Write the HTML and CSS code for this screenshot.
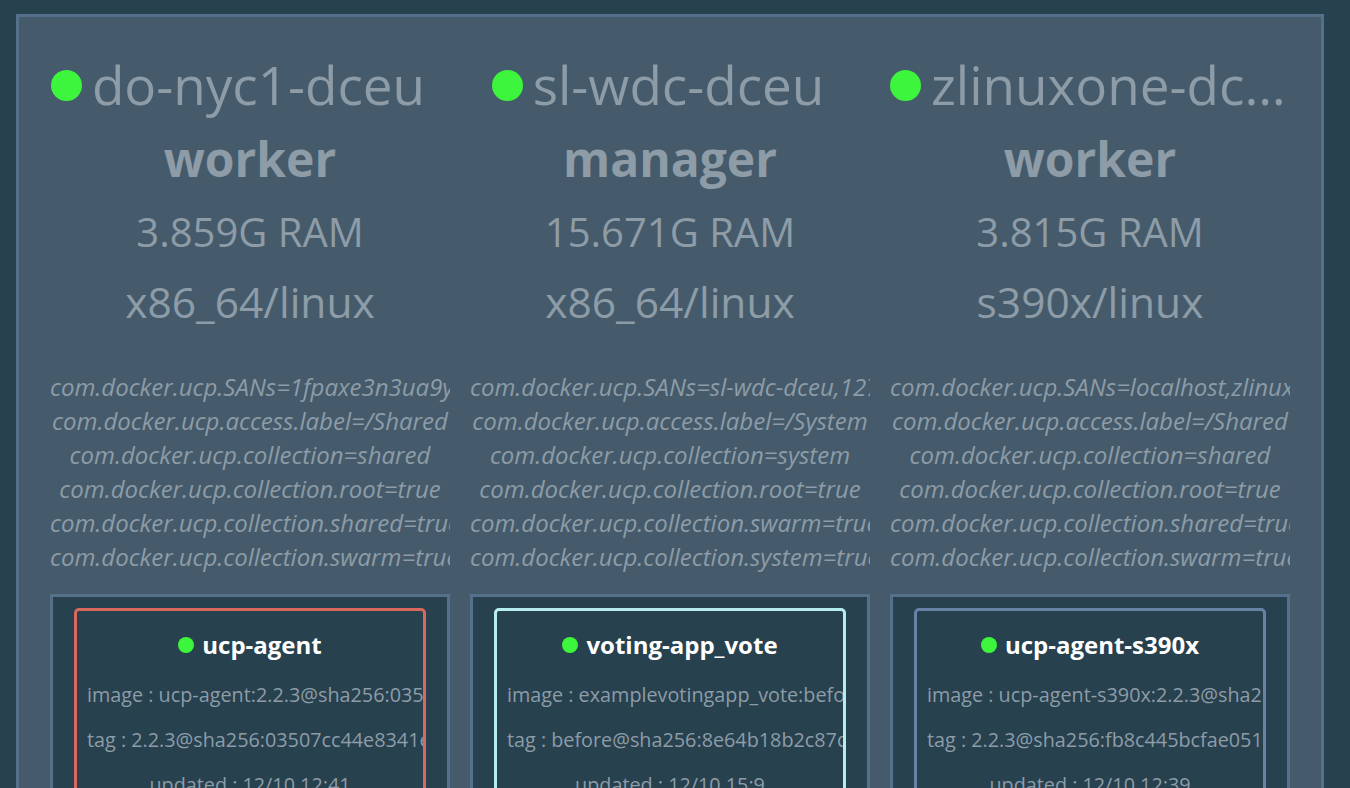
FILE: index.html
```html
<!DOCTYPE html>
<html lang="en">

<head>
    <meta charset="UTF-8">
    <meta name="viewport" content="width=device-width, initial-scale=1.0">
    <title>Swarm Visualizer</title>
    <link rel="stylesheet" href="styles.css">
</head>

<body>
    <div class="cluster">
        <div class="node">
            <div class="node-name"><span class="dot"></span><span class="name-text">do-nyc1-dceu</span></div>
            <div class="node-role">worker</div>
            <div class="node-info">3.859G RAM</div>
            <div class="node-info arch">x86_64/linux</div>
            <div class="labels">
                <div>com.docker.ucp.SANs=1fpaxe3n3ua9y4lhd8t1cv0ds,do-nyc1-dceu,127.0.0.1</div>
                <div>com.docker.ucp.access.label=/Shared</div>
                <div>com.docker.ucp.collection=shared</div>
                <div>com.docker.ucp.collection.root=true</div>
                <div>com.docker.ucp.collection.shared=true</div>
                <div>com.docker.ucp.collection.swarm=true</div>
            </div>
            <div class="tasks">
                <div class="task task-red">
                    <div class="task-name"><span class="dot small"></span>ucp-agent</div>
                    <div class="task-line">image : ucp-agent:2.2.3@sha256:03507cc44e8341e4a7b5b9ecc4c4ec6fa3f2c4a3d2</div>
                    <div class="task-line">tag : 2.2.3@sha256:03507cc44e8341e4a7b5b9ecc4c4ec6fa3f2c4a3d2</div>
                    <div class="task-line">updated : 12/10 12:41</div>
                </div>
            </div>
        </div>

        <div class="node">
            <div class="node-name"><span class="dot"></span><span class="name-text">sl-wdc-dceu</span></div>
            <div class="node-role">manager</div>
            <div class="node-info">15.671G RAM</div>
            <div class="node-info arch">x86_64/linux</div>
            <div class="labels">
                <div>com.docker.ucp.SANs=sl-wdc-dceu,127.0.0.1,169.45.100.12</div>
                <div>com.docker.ucp.access.label=/System</div>
                <div>com.docker.ucp.collection=system</div>
                <div>com.docker.ucp.collection.root=true</div>
                <div>com.docker.ucp.collection.swarm=true</div>
                <div>com.docker.ucp.collection.system=true</div>
            </div>
            <div class="tasks">
                <div class="task task-cyan">
                    <div class="task-name"><span class="dot small"></span>voting-app_vote</div>
                    <div class="task-line">image : examplevotingapp_vote:before@sha256:8e64b18b2c87de902a2b72321c89b4af4e2b942d</div>
                    <div class="task-line">tag : before@sha256:8e64b18b2c87de902a2b72321c89b4af4e2b942d</div>
                    <div class="task-line">updated : 12/10 15:9</div>
                </div>
            </div>
        </div>

        <div class="node">
            <div class="node-name"><span class="dot"></span><span class="name-text">zlinuxone-dceu</span></div>
            <div class="node-role">worker</div>
            <div class="node-info">3.815G RAM</div>
            <div class="node-info arch">s390x/linux</div>
            <div class="labels">
                <div>com.docker.ucp.SANs=localhost,zlinuxone-dceu,127.0.0.1</div>
                <div>com.docker.ucp.access.label=/Shared</div>
                <div>com.docker.ucp.collection=shared</div>
                <div>com.docker.ucp.collection.root=true</div>
                <div>com.docker.ucp.collection.shared=true</div>
                <div>com.docker.ucp.collection.swarm=true</div>
            </div>
            <div class="tasks">
                <div class="task task-slate">
                    <div class="task-name"><span class="dot small"></span>ucp-agent-s390x</div>
                    <div class="task-line">image : ucp-agent-s390x:2.2.3@sha256:fb8c445bcfae0514c7f1de3b0a6e9d2</div>
                    <div class="task-line">tag : 2.2.3@sha256:fb8c445bcfae0514c7f1de3b0a6e9d2</div>
                    <div class="task-line">updated : 12/10 12:39</div>
                </div>
            </div>
        </div>
    </div>
</body>

</html>
```

FILE: styles.css
```css
body {
    margin: 0;
    background-color: #27414f;
    font-family: 'Open Sans', 'Noto Sans', sans-serif;
    color: #8d9ca7;
    height: 788px;
    overflow: hidden;
}

.cluster {
    margin: 14px 26px 0 16px;
    border: 3px solid #54708a;
    background-color: #455b6b;
    padding: 31px 31px 0 31px;
    display: flex;
    gap: 20px;
    height: 900px;
}

.node {
    width: 400px;
    flex: none;
    text-align: center;
}

.node-name {
    display: flex;
    align-items: center;
    justify-content: center;
    font-size: 53px;
    line-height: 74px;
    white-space: nowrap;
}

/* spacer that gives way first when the name is too long */
.node-name::after {
    content: '';
    flex: 0 1000 24px;
}

.name-text {
    min-width: 0;
    overflow: hidden;
    text-overflow: ellipsis;
}

.dot {
    display: inline-block;
    width: 31px;
    height: 31px;
    margin-right: 10px;
    border-radius: 50%;
    background-color: #3cf53c;
    flex: none;
}

.dot.small {
    width: 16px;
    height: 16px;
    margin-right: 8px;
}

.node-role {
    font-weight: bold;
    font-size: 48px;
    line-height: 74px;
}

.node-info {
    font-size: 40px;
    line-height: 72px;
}

.node-info.arch {
    font-size: 42.5px;
    line-height: 68px;
}

.labels {
    margin-top: 34px;
    font-style: italic;
    font-size: 24px;
    line-height: 34px;
    white-space: nowrap;
    overflow: hidden;
}

.tasks {
    margin-top: 20px;
    border: 3px solid #54708a;
    background-color: #27414f;
    padding: 11px 21px;
    height: 300px;
}

.task {
    border: 3px solid;
    border-radius: 5px;
    padding: 19px 10px 0 10px;
    white-space: nowrap;
    overflow: hidden;
    height: 300px;
}

.task-red {
    border-color: #d9695e;
}

.task-cyan {
    border-color: #b6eef0;
}

.task-slate {
    border-color: #6882a6;
}

.task-name {
    display: flex;
    align-items: center;
    justify-content: center;
    color: #ffffff;
    font-weight: bold;
    font-size: 24px;
    line-height: 30px;
    margin-bottom: 12px;
}

.task-line {
    font-size: 19.8px;
    line-height: 45px;
}
```
